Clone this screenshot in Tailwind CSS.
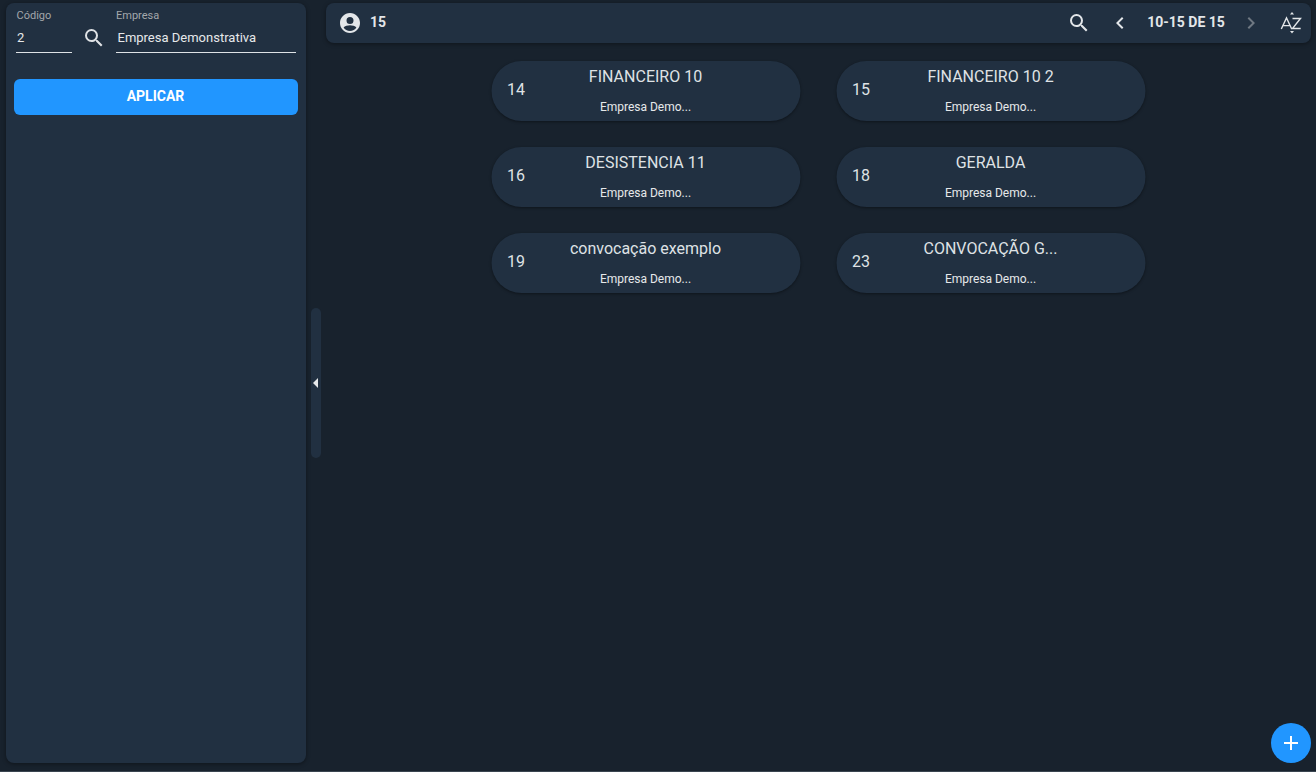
<!DOCTYPE html>
<html lang="pt">
<head>
  <meta charset="utf-8">
  <script src="https://cdn.jsdelivr.net/npm/@tailwindcss/browser@4"></script>
</head>
<body class="bg-[#18222d] font-['Roboto',sans-serif] overflow-hidden">
  <div class="w-[1316px] h-[772px] flex flex-col relative">
    <div class="flex-1 flex min-h-0 pl-[6px] pr-[5px] pt-[3px] pb-[8px]">

      <!-- Sidebar -->
      <aside class="w-[300px] shrink-0 bg-[#213041] rounded-lg shadow-[0_1px_4px_rgba(0,0,0,0.4)] pl-[8px] pr-[8px] flex flex-col">
        <div class="flex h-[50px] pl-[2px]">
          <div class="w-[56px] flex flex-col">
            <label class="text-[11px] leading-[13px] text-[#a3a7ab] pt-[6px] pl-[0.5px]">Código</label>
            <div class="mt-[3px] h-[28px] border-b border-[#dfe3e6] text-[13px] leading-[26px] text-[#e6e8ea] pl-[1px]">2</div>
          </div>
          <div class="w-[44px] flex justify-center pt-[23px]">
            <svg class="w-[24px] h-[24px] -ml-[1px]" viewBox="0 0 24 24" fill="#dfe2e5"><path d="M15.5 14h-.79l-.28-.27A6.47 6.47 0 0 0 16 9.5 6.5 6.5 0 1 0 9.5 16c1.61 0 3.09-.59 4.23-1.57l.27.28v.79l5 4.99L20.49 19l-4.99-5zm-6 0C7.01 14 5 11.99 5 9.5S7.01 5 9.5 5 14 7.01 14 9.5 11.99 14 9.5 14z"/></svg>
          </div>
          <div class="w-[180px] flex flex-col">
            <label class="text-[11px] leading-[13px] text-[#a3a7ab] pt-[6px]">Empresa</label>
            <div class="mt-[3px] h-[28px] border-b border-[#dfe3e6] text-[13px] leading-[26px] text-[#e6e8ea] pl-[1.5px]">Empresa Demonstrativa</div>
          </div>
        </div>
        <button class="mt-[26px] h-[36px] w-[284px] rounded-md bg-[#2196ff] text-white text-[14px] font-bold pb-[1px] pr-[1px]">APLICAR</button>
      </aside>

      <!-- Collapse handle -->
      <div class="w-[20px] shrink-0 flex items-center justify-center">
        <div class="w-[10px] h-[150px] rounded-[5px] bg-[#213041] flex items-center">
          <span class="w-0 h-0 ml-[2px] border-y-[5px] border-y-transparent border-r-[5px] border-r-[#e6e8ea]"></span>
        </div>
      </div>

      <!-- Main -->
      <main class="flex-1 min-w-0 flex flex-col">
        <header class="h-[40px] shrink-0 bg-[#213041] rounded-lg shadow-[0_1px_4px_rgba(0,0,0,0.4)] flex items-center pl-[12px] text-[#e3e6e9]">
          <svg class="w-[24px] h-[24px]" viewBox="0 0 24 24" fill="#e3e6e9"><path d="M12 2C6.48 2 2 6.48 2 12s4.48 10 10 10 10-4.48 10-10S17.52 2 12 2zm0 4a3.5 3.5 0 1 1 0 7 3.5 3.5 0 0 1 0-7zm0 14c-2.7 0-5.1-1.3-6.4-3.4C6.6 15 9.9 14.2 12 14.2s5.4.8 6.4 2.4C17.1 18.7 14.7 20 12 20z"/></svg>
          <span class="ml-[8px] text-[14px] font-bold pb-[1px]">15</span>
          <div class="ml-auto flex items-center">
            <svg class="w-[24px] h-[24px]" viewBox="0 0 24 24" fill="#e3e6e9"><path d="M15.5 14h-.79l-.28-.27A6.47 6.47 0 0 0 16 9.5 6.5 6.5 0 1 0 9.5 16c1.61 0 3.09-.59 4.23-1.57l.27.28v.79l5 4.99L20.49 19l-4.99-5zm-6 0C7.01 14 5 11.99 5 9.5S7.01 5 9.5 5 14 7.01 14 9.5 11.99 14 9.5 14z"/></svg>
            <svg class="w-[24px] h-[24px] ml-[17px]" viewBox="0 0 24 24" fill="#e3e6e9"><path d="M15.41 7.41 14 6l-6 6 6 6 1.41-1.41L10.83 12z"/></svg>
            <span class="ml-[15px] w-[78px] text-center text-[14px] font-bold whitespace-nowrap pb-[1px]">10-15 DE 15</span>
            <svg class="w-[24px] h-[24px] ml-[14px]" viewBox="0 0 24 24" fill="#6f7882"><path d="M10 6 8.59 7.41 13.17 12l-4.58 4.59L10 18l6-6z"/></svg>
            <svg class="w-[24px] h-[24px] ml-[16px] mr-[8px]" viewBox="0 0 24 24" fill="none" stroke="#e3e6e9" stroke-width="1.4">
              <path d="M2.3 18 7.5 7l5.2 11M4 14.6h7"/>
              <path d="M13.5 7.5h8L13.5 17.5h8.2"/>
              <path d="M11 3.5 13 1l2 2.5z" fill="#e3e6e9" stroke="none"/>
              <path d="M11 20 13 22.5l2-2.5z" fill="#e3e6e9" stroke="none"/>
            </svg>
          </div>
        </header>

        <div class="mt-[18px] grid grid-cols-[309px_309px] justify-center gap-x-[36px] gap-y-[26px] -translate-x-[0.5px]">
          <div class="h-[60px] rounded-[30px] bg-[#213041] shadow-[0_1px_3px_rgba(0,0,0,0.4)] grid grid-cols-[1fr_auto_1fr] text-[#dfe2e5]">
            <span class="pl-[16px] pt-[19px] text-[16px] leading-[20px]">14</span>
            <div class="text-center"><p class="pt-[6px] text-[16px] leading-[19px]">FINANCEIRO 10</p><p class="mt-[14px] text-[12px] leading-[14px] text-[#e6e8ea]">Empresa Demo...</p></div>
            <span></span>
          </div>
          <div class="h-[60px] rounded-[30px] bg-[#213041] shadow-[0_1px_3px_rgba(0,0,0,0.4)] grid grid-cols-[1fr_auto_1fr] text-[#dfe2e5]">
            <span class="pl-[16px] pt-[19px] text-[16px] leading-[20px]">15</span>
            <div class="text-center"><p class="pt-[6px] text-[16px] leading-[19px]">FINANCEIRO 10 2</p><p class="mt-[14px] text-[12px] leading-[14px] text-[#e6e8ea]">Empresa Demo...</p></div>
            <span></span>
          </div>
          <div class="h-[60px] rounded-[30px] bg-[#213041] shadow-[0_1px_3px_rgba(0,0,0,0.4)] grid grid-cols-[1fr_auto_1fr] text-[#dfe2e5]">
            <span class="pl-[16px] pt-[19px] text-[16px] leading-[20px]">16</span>
            <div class="text-center"><p class="pt-[6px] text-[16px] leading-[19px]">DESISTENCIA 11</p><p class="mt-[14px] text-[12px] leading-[14px] text-[#e6e8ea]">Empresa Demo...</p></div>
            <span></span>
          </div>
          <div class="h-[60px] rounded-[30px] bg-[#213041] shadow-[0_1px_3px_rgba(0,0,0,0.4)] grid grid-cols-[1fr_auto_1fr] text-[#dfe2e5]">
            <span class="pl-[16px] pt-[19px] text-[16px] leading-[20px]">18</span>
            <div class="text-center"><p class="pt-[6px] text-[16px] leading-[19px]">GERALDA</p><p class="mt-[14px] text-[12px] leading-[14px] text-[#e6e8ea]">Empresa Demo...</p></div>
            <span></span>
          </div>
          <div class="h-[60px] rounded-[30px] bg-[#213041] shadow-[0_1px_3px_rgba(0,0,0,0.4)] grid grid-cols-[1fr_auto_1fr] text-[#dfe2e5]">
            <span class="pl-[16px] pt-[19px] text-[16px] leading-[20px]">19</span>
            <div class="text-center"><p class="pt-[6px] text-[16px] leading-[19px]">convocação exemplo</p><p class="mt-[14px] text-[12px] leading-[14px] text-[#e6e8ea]">Empresa Demo...</p></div>
            <span></span>
          </div>
          <div class="h-[60px] rounded-[30px] bg-[#213041] shadow-[0_1px_3px_rgba(0,0,0,0.4)] grid grid-cols-[1fr_auto_1fr] text-[#dfe2e5]">
            <span class="pl-[16px] pt-[19px] text-[16px] leading-[20px]">23</span>
            <div class="text-center"><p class="pt-[6px] text-[16px] leading-[19px]">CONVOCAÇÃO G...</p><p class="mt-[14px] text-[12px] leading-[14px] text-[#e6e8ea]">Empresa Demo...</p></div>
            <span></span>
          </div>
        </div>
      </main>
    </div>
    <div class="h-[1px] shrink-0 bg-[#3a4550]"></div>

    <!-- FAB -->
    <button class="absolute left-[1271px] top-[723px] w-[40px] h-[40px] rounded-full bg-[#2196ff] flex items-center justify-center">
      <svg class="w-[24px] h-[24px]" viewBox="0 0 24 24" fill="#fff"><path d="M19 13h-6v6h-2v-6H5v-2h6V5h2v6h6v2z"/></svg>
    </button>
  </div>
</body>
</html>
